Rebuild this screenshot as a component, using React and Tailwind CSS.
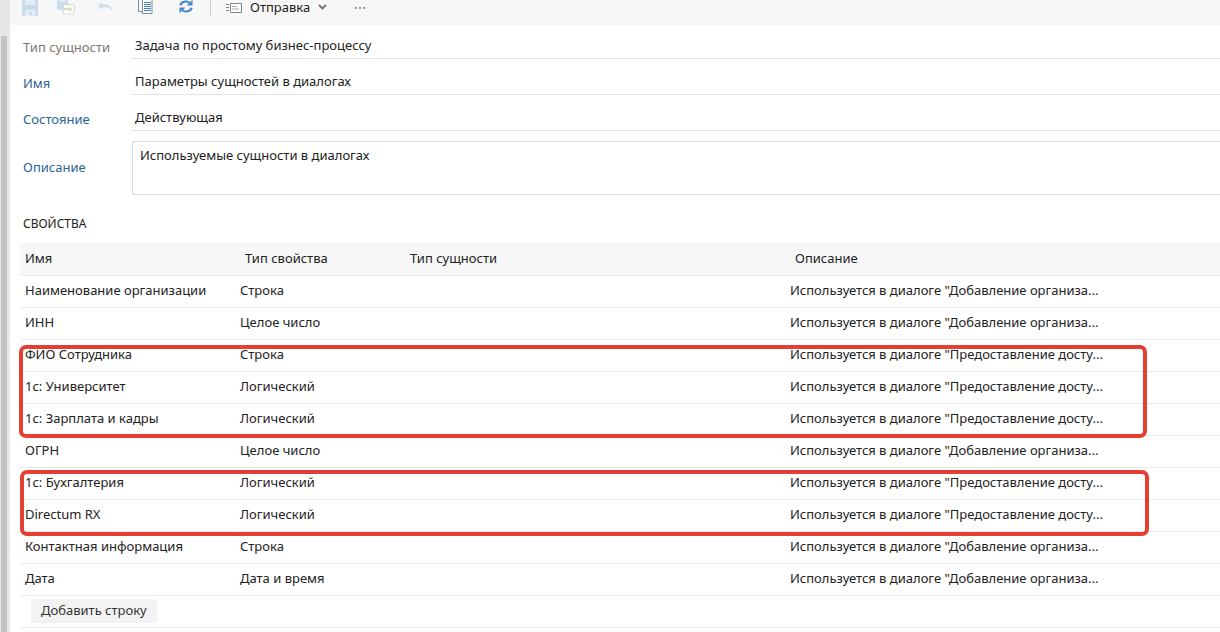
import React from "react"
import { FiMoreHorizontal } from "react-icons/fi"

const FONT = "font-['Noto_Sans','Open_Sans',sans-serif]"

const ADD = 'Используется в диалоге "Добавление организа...'
const GRANT = 'Используется в диалоге "Предоставление досту...'

const rows = [
  ["Наименование организации", "Строка", ADD],
  ["ИНН", "Целое число", ADD],
  ["ФИО Сотрудника", "Строка", GRANT],
  ["1с: Университет", "Логический", GRANT],
  ["1с: Зарплата и кадры", "Логический", GRANT],
  ["ОГРН", "Целое число", ADD],
  ["1с: Бухгалтерия", "Логический", GRANT],
  ["Directum RX", "Логический", GRANT],
  ["Контактная информация", "Строка", ADD],
  ["Дата", "Дата и время", ADD],
]

function SaveIcon() {
  return (
    <svg width="16" height="16" viewBox="0 0 16 16" className="block">
      <path d="M0 0h16v16H0z" fill="#c9dcec" />
      <path d="M3 0h10v5H3zM3 10h10v6H3z" fill="#e4edf5" />
      <path d="M7 12h3v3H7z" fill="#c9dcec" />
    </svg>
  )
}

function SaveAsIcon() {
  return (
    <svg width="18" height="16" viewBox="0 0 18 16" className="block">
      <path d="M0 0h11v11H0z" fill="#c9dcec" />
      <path d="M2 0h7v3H2z" fill="#e4edf5" />
      <path d="M6.500 5.500h10.500v9.500H6.500z" fill="#fff" stroke="#d8d8d8" />
      <path d="M7 9h5V7l3.500 3-3.500 3v-2H7z" fill="#cfe3b4" />
    </svg>
  )
}

function UndoIcon() {
  return (
    <svg width="17" height="10" viewBox="0 0 17 10" className="block">
      <path d="M1 4 5 0v2.500c5-1 9 0 11 6.500-3-3.500-6-4-11-3.500V8z" fill="#cfdfec" />
    </svg>
  )
}

function ClipboardIcon() {
  return (
    <svg width="15" height="15" viewBox="0 0 15 15" className="block">
      <path d="M.5 0v12.500H4" fill="none" stroke="#7f8c99" />
      <path d="M4.500 0.500h9.500v14H4.500z" fill="#fff" stroke="#7f8c99" />
      <path d="M6 3h7v1H6zM6 5h7v1H6zM6 7h7v1H6zM6 9h7v1H6zM6 11h7v1H6z" fill="#3f7fbf" />
    </svg>
  )
}

function RefreshIcon() {
  return (
    <svg width="16" height="15" viewBox="0 0 16 15" className="block">
      <path d="M1.200 6C2 2.800 4.800 1.500 8 1.500c1.700 0 3.200.6 4.300 1.700L14.500.5V6.500H8.700l2-2C9.900 3.700 9 3.500 8 3.500 5.800 3.500 4.200 4.500 3.600 6.500z" fill="#4a88c4" />
      <path d="M14.800 9c-.8 3.200-3.600 4.500-6.800 4.500-1.700 0-3.200-.6-4.300-1.700L1.500 14.500V8.500h5.800l-2 2c.8.800 1.700 1 2.700 1 2.200 0 3.800-1 4.400-3z" fill="#4a88c4" />
    </svg>
  )
}

function SendIcon() {
  return (
    <svg width="16" height="10" viewBox="0 0 16 10" className="block">
      <path d="M0 1h3v1H0zM0 4h3v1H0zM0 7h3v1H0z" fill="#7f8790" />
      <path d="M4.500 .5h11v9h-11z" fill="#fff" stroke="#7f8790" />
      <path d="M6 3h5v1H6zM6 5.500h7v1H6z" fill="#a5adb5" />
    </svg>
  )
}

function FormField({ label, value, muted }) {
  return (
    <div className="flex h-9 items-end">
      <div className={`w-[112px] pb-[2px] pl-[3px] ${muted ? "text-[#7b7671]" : "text-[#2a6496]"}`}>{label}</div>
      <div className="h-[26px] flex-1 border-b border-[#e2e3e5] pl-[3px] leading-[24px] text-[#222]">{value}</div>
    </div>
  )
}

export default function App() {
  return (
    <div className={`flex h-[632px] w-[1220px] overflow-hidden bg-white text-[13px] text-[#333] ${FONT}`}>
      <div className="w-[10px] shrink-0 bg-[#e6e7e9] pl-[1px] pt-[36px]">
        <div className="h-full w-[6px] bg-[#c4c4c4]" />
      </div>
      <main className="relative min-w-0 flex-1">
        <div className="flex h-[25px] items-start bg-[#f7f7f7] pl-[12px]">
          <div className="flex w-[35px]"><SaveIcon /></div>
          <div className="-mt-[1px] w-[40px]"><SaveAsIcon /></div>
          <div className="mt-[2px] w-[41px]"><UndoIcon /></div>
          <div className="-mt-[1px] w-[40px]"><ClipboardIcon /></div>
          <div className="-mt-[1px] w-[32px]"><RefreshIcon /></div>
          <div className="h-[17px] w-[16px] border-l border-[#c8c8c8]" />
          <div className="mt-[3px]"><SendIcon /></div>
          <div className="-mt-[1px] ml-[8px] leading-[16px] text-[#1b1b1b]">Отправка</div>
          <svg width="9" height="6" viewBox="0 0 9 6" className="ml-[8px] mt-[4px]">
            <path d="M1 1l3.500 3.500L8 1" fill="none" stroke="#6f7377" strokeWidth="1.800" />
          </svg>
          <FiMoreHorizontal className="ml-[26px] mt-[1px] text-[14px] text-[#9a9ea3]" />
        </div>

        <div className="pl-[10px]">
          <div className="-mt-[2px]">
            <FormField label="Тип сущности" value="Задача по простому бизнес-процессу" muted />
            <FormField label="Имя" value="Параметры сущностей в диалогах" />
            <FormField label="Состояние" value="Действующая" />
          </div>
          <div className="mt-[10px] flex h-[54px] items-center">
            <div className="w-[112px] pl-[3px] text-[#2a6496]">Описание</div>
            <div className="h-full flex-1 rounded-l-[3px] border border-r-0 border-[#dcdee2] px-[7px] py-[4px] text-[#222]">
              Используемые сущности в диалогах
            </div>
          </div>
          <div className="mt-[20px] pl-[3px] text-[12px] leading-[18px] text-[#222]">СВОЙСТВА</div>
          <table className="mt-[10px] w-full table-fixed border-collapse text-left text-[#222]">
            <colgroup>
              <col className="w-[220px]" />
              <col className="w-[165px]" />
              <col className="w-[385px]" />
              <col />
            </colgroup>
            <thead>
              <tr className="h-[32px] border-b border-[#ebebeb] bg-[#f7f7f7]">
                {["Имя", "Тип свойства", "Тип сущности", "Описание"].map((title) => (
                  <th key={title} className="pl-[5px] pl-0 font-normal first:pl-[5px]">{title}</th>
                ))}
              </tr>
            </thead>
            <tbody>
              {rows.map(([name, type, description]) => (
                <tr key={name} className="h-[32px] border-b border-[#ebebeb]">
                  <td className="pl-[5px]">{name}</td>
                  <td>{type}</td>
                  <td />
                  <td>{description}</td>
                </tr>
              ))}
              <tr className="h-[32px] border-b border-[#ebebeb]">
                <td colSpan="4" className="pl-[11px]">
                  <button type="button" className="h-[24px] bg-[#f3f3f3] px-[10px] text-[#333]">Добавить строку</button>
                </td>
              </tr>
            </tbody>
          </table>
        </div>

        <div className="absolute left-[9px] top-[345px] h-[93px] w-[1128px] rounded-[7px] border-[4px] border-[#e53f33]" />
        <div className="absolute left-[10px] top-[470px] h-[66px] w-[1129px] rounded-[7px] border-[4px] border-[#e53f33]" />
      </main>
    </div>
  )
}
